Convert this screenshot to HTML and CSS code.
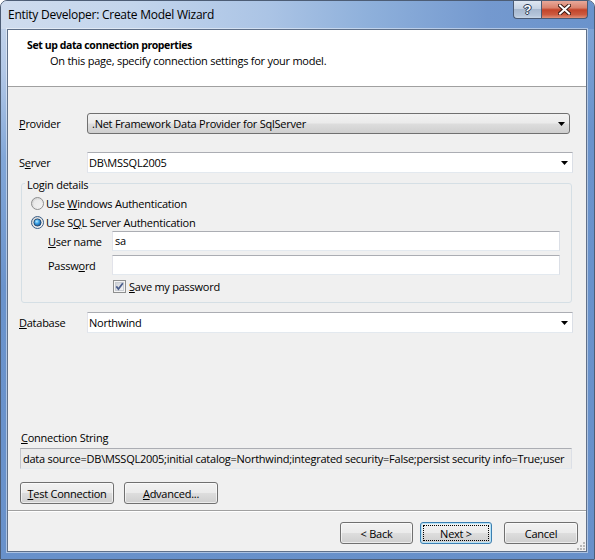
FILE: index.html
```html
<!DOCTYPE html>
<html>
<head>
<meta charset="utf-8">
<title>Entity Developer: Create Model Wizard</title>
<link rel="stylesheet" href="styles.css">
</head>
<body>
<div class="window">
  <div class="titlebar">
    <span class="title">Entity Developer: Create Model Wizard</span>
    <div class="caption-buttons">
      <div class="cbtn help"><span>?</span></div>
      <div class="cbtn close">
        <svg width="13" height="11" viewBox="0 0 13 11"><path d="M2 1.5 L11 9.5 M11 1.5 L2 9.5" stroke="#3a1a14" stroke-width="4" stroke-linecap="square"/><path d="M2 1.5 L11 9.5 M11 1.5 L2 9.5" stroke="#fff" stroke-width="2" stroke-linecap="square"/></svg>
      </div>
    </div>
  </div>
  <div class="client">
    <div class="header">
      <div class="h-title">Set up data connection properties</div>
      <div class="h-sub">On this page, specify connection settings for your model.</div>
    </div>
    <div class="body">
      <div class="row provider-row">
        <span class="label"><u>P</u>rovider</span>
        <div class="combo list">
          <span class="combo-text">.Net Framework Data Provider for SqlServer</span>
          <svg class="arrow" width="7" height="4" viewBox="0 0 7 4"><polygon points="0,0 7,0 3.5,4" fill="#000"/></svg>
        </div>
      </div>
      <div class="row server-row">
        <span class="label">S<u>e</u>rver</span>
        <div class="combo edit">
          <span class="combo-text">DB\MSSQL2005</span>
          <svg class="arrow" width="7" height="4" viewBox="0 0 7 4"><polygon points="0,0 7,0 3.5,4" fill="#000"/></svg>
        </div>
      </div>
      <fieldset class="login">
        <legend>Login details</legend>
        <div class="radio-row">
          <svg class="radio" width="13" height="13" viewBox="0 0 13 13"><defs><linearGradient id="rg1" x1="0" y1="0" x2="1" y2="1"><stop offset="0" stop-color="#cfcfcf"/><stop offset="1" stop-color="#fbfbfb"/></linearGradient></defs><circle cx="6.5" cy="6.5" r="6" fill="url(#rg1)" stroke="#8e8f8f"/><circle cx="6.5" cy="6.5" r="4" fill="#f1f1f1" opacity=".6"/></svg>
          <span>Use <u>W</u>indows Authentication</span>
        </div>
        <div class="radio-row">
          <svg class="radio" width="13" height="13" viewBox="0 0 13 13"><defs><linearGradient id="rg2" x1="0" y1="0" x2="1" y2="1"><stop offset="0" stop-color="#cfcfcf"/><stop offset="1" stop-color="#fbfbfb"/></linearGradient><radialGradient id="dot" cx="0.4" cy="0.35" r="0.7"><stop offset="0" stop-color="#b8ecff"/><stop offset="0.45" stop-color="#38a0e6"/><stop offset="1" stop-color="#144a86"/></radialGradient></defs><circle cx="6.5" cy="6.5" r="6" fill="url(#rg2)" stroke="#3b5e86"/><circle cx="6.5" cy="6.5" r="3.6" fill="url(#dot)" stroke="#1b3d66" stroke-width=".8"/></svg>
          <span>Use S<u>Q</u>L Server Authentication</span>
        </div>
        <div class="field-row user">
          <span class="sublabel"><u>U</u>ser name</span>
          <div class="textbox">sa</div>
        </div>
        <div class="field-row pw">
          <span class="sublabel">Passw<u>o</u>rd</span>
          <div class="textbox"></div>
        </div>
        <div class="check-row">
          <svg class="check" width="13" height="13" viewBox="0 0 13 13"><defs><linearGradient id="cg" x1="0" y1="0" x2="1" y2="1"><stop offset="0" stop-color="#cbcfd5"/><stop offset="1" stop-color="#f7f7f7"/></linearGradient></defs><rect x="0.5" y="0.5" width="12" height="12" fill="#f4f4f4" stroke="#8e8f8f"/><rect x="2.5" y="2.5" width="8" height="8" fill="url(#cg)" stroke="#c8ccd2"/><path d="M3.3 6.4 L5.4 9 L9.8 3.2" fill="none" stroke="#4a5d8c" stroke-width="1.7"/></svg>
          <span><u>S</u>ave my password</span>
        </div>
      </fieldset>
      <div class="row database-row">
        <span class="label"><u>D</u>atabase</span>
        <div class="combo edit">
          <span class="combo-text">Northwind</span>
          <svg class="arrow" width="7" height="4" viewBox="0 0 7 4"><polygon points="0,0 7,0 3.5,4" fill="#000"/></svg>
        </div>
      </div>
      <div class="spacer"></div>
      <div class="conn-label"><u>C</u>onnection String</div>
      <div class="conn-box">data source=DB\MSSQL2005;initial catalog=Northwind;integrated security=False;persist security info=True;user</div>
      <div class="actions">
        <div class="btn wide"><span><u>T</u>est Connection</span></div>
        <div class="btn wide"><span><u>A</u>dvanced...</span></div>
      </div>
    </div>
    <div class="footer">
      <div class="btn nav back">&lt; Back</div>
      <div class="btn nav next">Next &gt;</div>
      <div class="btn nav cancel">Cancel</div>
      <svg class="grip" width="8" height="8" viewBox="0 0 8 8"><g fill="#b8b8b8"><rect x="6" y="0" width="2" height="2"/><rect x="3" y="3" width="2" height="2"/><rect x="6" y="3" width="2" height="2"/><rect x="0" y="6" width="2" height="2"/><rect x="3" y="6" width="2" height="2"/><rect x="6" y="6" width="2" height="2"/></g></svg>
    </div>
  </div>
</div>
</body>
</html>
```

FILE: styles.css
```css
html, body {
  margin: 0;
  padding: 0;
  background: #ffffff;
}

body {
  font-family: "Open Sans", "Noto Sans", sans-serif;
  font-size: 11px;
  letter-spacing: -0.25px;
  color: #000;
}

u {
  text-decoration: underline;
  text-underline-offset: 1px;
}

.window {
  width: 595px;
  height: 560px;
  box-sizing: border-box;
  border: 1px solid #4d5d75;
  border-radius: 7px 7px 0 0;
  background: linear-gradient(165deg, #c9d8ec 0%, #b2c8e7 10%, #82a7d8 22%, #6a93cc 40%, #6790ca 100%);
  display: flex;
  flex-direction: column;
  overflow: hidden;
}

.titlebar {
  height: 28px;
  flex: none;
  display: flex;
  align-items: flex-start;
  padding-left: 7px;
  background: linear-gradient(to right, #cfdcee 0%, #c3d5ec 22%, #abc4e5 45%, #8eb0db 62%, #7499cf 82%, #6a93cc 100%);
}

.title {
  line-height: 28px;
  font-size: 12px;
  color: #000;
  letter-spacing: -0.25px;
}

.caption-buttons {
  margin-left: auto;
  margin-right: 6px;
  display: flex;
}

.cbtn {
  height: 18px;
  box-sizing: border-box;
  display: flex;
  align-items: center;
  justify-content: center;
  border: 1px solid #4a5a74;
  border-top: none;
}

.cbtn.help {
  width: 28px;
  border-right: none;
  border-radius: 0 0 0 4px;
  background: linear-gradient(to bottom, #dfe7f2 0%, #c6d3e4 45%, #a7b8cf 50%, #b5c5da 85%, #c9d6e6 100%);
}

.cbtn.help span {
  font-family: "Liberation Sans", sans-serif;
  font-weight: bold;
  font-size: 13px;
  letter-spacing: 0;
  color: #fff;
  line-height: 16px;
  text-shadow: 0 0 1px #1c2b44, 1px 0 0 #2c3c58, -1px 0 0 #2c3c58, 0 1px 0 #2c3c58, 0 -1px 0 #2c3c58;
}

.cbtn.close {
  width: 47px;
  border-radius: 0 0 4px 0;
  background: linear-gradient(to bottom, #e8a99a 0%, #d9826d 40%, #c3442a 52%, #cc5a3f 80%, #e0917a 100%);
}

.client {
  flex: 1;
  margin: 0 7px 7px 6px;
  border: 1px solid #5f7089;
  box-shadow: 0 0 0 1px rgba(255, 255, 255, 0.45);
  background: #f0f0f0;
  display: flex;
  flex-direction: column;
  min-height: 0;
}

.header {
  flex: none;
  background: #ffffff;
  border-bottom: 1px solid #a0a0a0;
  padding: 7px 0 0 19px;
  height: 49px;
}

.h-title {
  font-weight: bold;
  font-size: 10.5px;
  line-height: 16px;
  letter-spacing: -0.4px;
}

.h-sub {
  margin-left: 23px;
  line-height: 16px;
}

.body {
  flex: 1;
  display: flex;
  flex-direction: column;
  padding: 26px 13px 6px 11px;
  min-height: 0;
}

.row {
  display: flex;
  align-items: center;
}

.label {
  width: 68px;
  flex: none;
}

.server-row {
  margin-top: 18px;
}

.combo {
  flex: 1;
  height: 21px;
  box-sizing: border-box;
  display: flex;
  align-items: center;
}

.combo.list {
  margin-right: 3px;
  border: 1px solid #707070;
  border-radius: 3px;
  background: linear-gradient(to bottom, #f2f2f2 0%, #ebebeb 48%, #dddddd 52%, #cfcfcf 100%);
  padding: 0 4px 0 4px;
}

.combo.edit {
  border: 1px solid;
  border-color: #abadb3 #dbdfe6 #e3e9ef #e2e3ea;
  background: #ffffff;
  padding: 0 4px 0 1px;
}

.combo-text {
  flex: 1;
  white-space: nowrap;
  overflow: hidden;
}

.arrow {
  flex: none;
}

.login {
  margin: 2px 1px 0 2px;
  padding: 3px 11px 9px 9px;
  border: 1px solid #d5dfe5;
  border-radius: 3px;
  min-width: 0;
}

.login legend {
  margin-left: -6px;
  padding: 4px 2px 0;
  line-height: 12px;
}

.radio-row {
  height: 19px;
  display: flex;
  align-items: center;
}

.radio {
  flex: none;
  margin-right: 2px;
}

.field-row {
  display: flex;
  align-items: center;
  padding-left: 17px;
}

.field-row.user {
  margin-top: -1px;
}

.field-row.pw {
  margin-top: 4px;
}

.sublabel {
  width: 64px;
  flex: none;
}

.textbox {
  flex: 1;
  height: 20px;
  box-sizing: border-box;
  border: 1px solid;
  border-color: #abadb3 #dbdfe6 #e3e9ef #e2e3ea;
  background: #ffffff;
  padding: 0 2px;
  line-height: 18px;
}

.check-row {
  display: flex;
  align-items: center;
  height: 13px;
  margin-top: 5px;
  padding-left: 82px;
}

.check {
  flex: none;
  margin-right: 3px;
}

.database-row {
  margin-top: 9px;
}

.spacer {
  flex: 1;
}

.conn-label {
  margin-left: 2px;
  line-height: 14px;
}

.conn-box {
  margin: 3px 1px 0 1px;
  height: 21px;
  box-sizing: border-box;
  border: 1px solid;
  border-color: #abadb3 #dbdfe6 #e3e9ef #c4c6cc;
  background: #ebebeb;
  padding: 0 2px;
  line-height: 19px;
  white-space: nowrap;
  overflow: hidden;
}

.actions {
  display: flex;
  gap: 10px;
  margin: 13px 0 0 1px;
}

.btn {
  height: 22px;
  box-sizing: border-box;
  border: 1px solid #707070;
  border-radius: 3px;
  background: linear-gradient(to bottom, #f2f2f2 0%, #ebebeb 48%, #dddddd 52%, #cfcfcf 100%);
  box-shadow: inset 0 0 0 1px rgba(255, 255, 255, 0.6);
  display: flex;
  align-items: center;
  justify-content: center;
  white-space: nowrap;
}

.btn.wide {
  width: 94px;
}

.footer {
  flex: none;
  height: 41px;
  box-sizing: border-box;
  border-top: 1px solid #a0a0a0;
  box-shadow: inset 0 1px 0 #ffffff;
  display: flex;
  justify-content: flex-end;
  align-items: flex-start;
  padding: 11px 8px 0 0;
  position: relative;
}

.btn.nav {
  width: 73px;
}

.btn.next {
  width: 72px;
  margin-left: 7px;
  border-color: #3c7fb1;
  box-shadow: inset 0 0 0 1px #b7e3f7;
  outline: 1px dotted #000;
  outline-offset: -4px;
}

.btn.cancel {
  margin-left: 12px;
  width: 74px;
}

.grip {
  position: absolute;
  right: 1px;
  bottom: 1px;
}
```
